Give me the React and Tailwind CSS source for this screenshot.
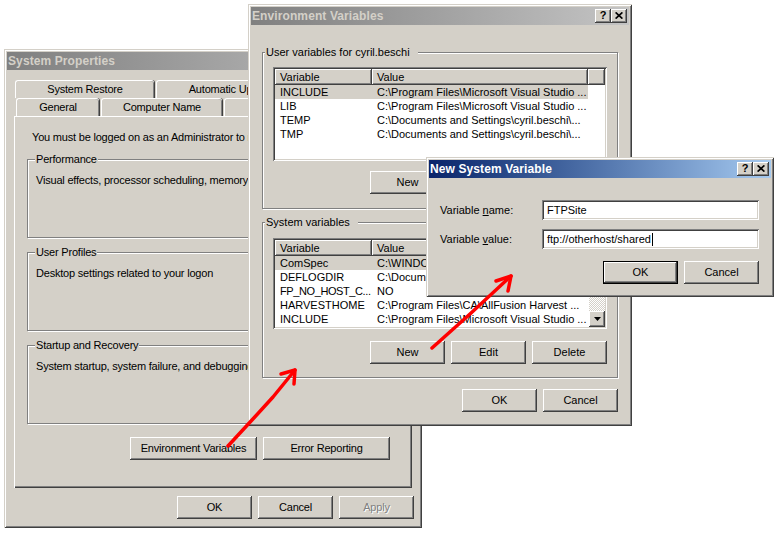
const frame =
  "bg-[#d4d0c8] shadow-[inset_1px_1px_0_#d4d0c8,inset_-1px_-1px_0_#404040,inset_2px_2px_0_#ffffff,inset_-2px_-2px_0_#808080]";
const raised =
  "bg-[#d4d0c8] shadow-[inset_-1px_-1px_0_#404040,inset_1px_1px_0_#ffffff,inset_-2px_-2px_0_#808080,inset_2px_2px_0_#d4d0c8]";
const sunken =
  "shadow-[inset_1px_1px_0_#808080,inset_-1px_-1px_0_#ffffff,inset_2px_2px_0_#404040,inset_-2px_-2px_0_#d4d0c8]";
const headCell =
  "shadow-[inset_-1px_-1px_0_#404040,inset_1px_1px_0_#ffffff,inset_-2px_-2px_0_#808080]";
const etched =
  "min-w-0 border border-[#808080] shadow-[1px_1px_0_#ffffff,inset_1px_1px_0_#ffffff]";

function CaptionButtons() {
  return (
    <div className="mr-[2px] flex">
      <div className={`flex h-[14px] w-[16px] items-center justify-center pb-[1px] ${raised}`}>
        <span className="text-[11px] font-bold leading-none text-black">?</span>
      </div>
      <div className={`flex h-[14px] w-[16px] items-center justify-center pb-[1px] ${raised}`}>
        <svg width="8" height="7" viewBox="0 0 8 7">
          <path d="M0.6 0.4 L7.4 6.6 M7.4 0.4 L0.6 6.6" stroke="#000" strokeWidth="1.7" />
        </svg>
      </div>
    </div>
  );
}

function TitleBar({ title, active }) {
  return (
    <div
      className={`flex h-[18px] shrink-0 items-center justify-between pl-[1px] ${
        active
          ? "bg-linear-to-r from-[#0a246a] to-[#a6caf0] text-white"
          : "bg-linear-to-r from-[#808080] to-[#c4c4c4] text-[#d4d0c8]"
      }`}
    >
      <span className="whitespace-nowrap text-[12px] font-bold tracking-[0.1px]">{title}</span>
      <CaptionButtons />
    </div>
  );
}

function Btn({ children, className = "w-[75px]", def = false, disabled = false }) {
  return (
    <div
      className={`flex h-[23px] shrink-0 items-center justify-center whitespace-nowrap ${raised} ${
        def ? "border border-black" : ""
      } ${className}`}
    >
      {disabled ? (
        <span className="text-[#808080] [text-shadow:1px_1px_0_#ffffff]">{children}</span>
      ) : (
        children
      )}
    </div>
  );
}

function Tab({ className, children }) {
  return (
    <div
      className={`flex h-full items-center justify-center whitespace-nowrap rounded-t-[3px] border-l border-t border-white shadow-[inset_-1px_0_0_#808080,1px_0_0_#404040] ${className}`}
    >
      {children}
    </div>
  );
}

function Group({ legend, className, legendClass, children }) {
  return (
    <fieldset className={`${etched} ${className}`}>
      <legend className={`bg-[#d4d0c8] px-[1px] leading-[11px] ${legendClass}`}>{legend}</legend>
      {children}
    </fieldset>
  );
}

function ListView({ rows, height, scroll = false }) {
  return (
    <div className={`bg-white p-[2px] ${sunken} ${height}`}>
      <div className="flex h-full overflow-hidden bg-white">
        <div className="flex min-w-0 flex-1 flex-col">
          <div className="flex h-[16px] shrink-0 bg-[#d4d0c8]">
            <div className={`flex w-[97px] shrink-0 items-center pl-[5px] ${headCell}`}>Variable</div>
            <div className={`flex w-[216px] shrink-0 items-center pl-[5px] ${headCell}`}>Value</div>
            <div className={`flex-1 ${headCell}`} />
          </div>
          {rows.map((r, i) => (
            <div
              key={i}
              className={`flex h-[14px] w-[313px] shrink-0 items-center whitespace-nowrap ${
                r[2] ? "bg-[#d4d0c8]" : ""
              }`}
            >
              <div className={`w-[97px] shrink-0 overflow-hidden pl-[5px] ${r[3] ? "tracking-[-0.4px]" : ""}`}>
                {r[0]}
              </div>
              <div className="w-[216px] shrink-0 overflow-hidden pl-[5px]">{r[1]}</div>
            </div>
          ))}
        </div>
        {scroll && (
          <div className="flex w-[16px] shrink-0 flex-col">
            <div className={`flex h-[16px] shrink-0 items-center justify-center ${raised}`}>
              <svg width="7" height="4" viewBox="0 0 7 4">
                <path d="M0 4h7L3.5 0z" fill="#000" />
              </svg>
            </div>
            <div className={`h-[24px] shrink-0 ${raised}`} />
            <div className="flex-1 bg-[repeating-conic-gradient(#ffffff_0_25%,#d4d0c8_0_50%)] bg-[length:2px_2px]" />
            <div className={`flex h-[16px] shrink-0 items-center justify-center ${raised}`}>
              <svg width="7" height="4" viewBox="0 0 7 4">
                <path d="M0 0h7L3.5 4z" fill="#000" />
              </svg>
            </div>
          </div>
        )}
      </div>
    </div>
  );
}

const userRows = [
  ["INCLUDE", "C:\\Program Files\\Microsoft Visual Studio ...", true],
  ["LIB", "C:\\Program Files\\Microsoft Visual Studio ..."],
  ["TEMP", "C:\\Documents and Settings\\cyril.beschi\\..."],
  ["TMP", "C:\\Documents and Settings\\cyril.beschi\\..."],
];

const sysRows = [
  ["ComSpec", "C:\\WINDOWS\\system32\\cmd.exe", true],
  ["DEFLOGDIR", "C:\\Documents and Settings\\All Users\\..."],
  ["FP_NO_HOST_C...", "NO", false, true],
  ["HARVESTHOME", "C:\\Program Files\\CA\\AllFusion Harvest ..."],
  ["INCLUDE", "C:\\Program Files\\Microsoft Visual Studio ..."],
  ["LIB", "C:\\Program Files\\Microsoft Visual Studio ..."],
];

function SystemProperties() {
  return (
    <div className={`absolute left-[4px] top-[49px] flex h-[479px] w-[418px] flex-col p-[3px] ${frame}`}>
      <TitleBar title="System Properties" />
      <div className="flex flex-1 flex-col px-[7px] pt-[10px] tracking-[-0.2px]">
        <div className="flex h-[18px] pl-[1px]">
          <Tab className="w-[139px]">System Restore</Tab>
          <Tab className="ml-[2px] w-[154px]">Automatic Updates</Tab>
          <Tab className="ml-[2px] w-[100px]">Remote</Tab>
        </div>
        <div className="flex h-[18px] pl-[2px]">
          <Tab className="w-[83px]">General</Tab>
          <Tab className="ml-[2px] w-[121px]">Computer Name</Tab>
          <Tab className="ml-[2px] w-[96px]">Hardware</Tab>
          <Tab className="ml-[2px] w-[86px]">Advanced</Tab>
        </div>
        <div className="flex h-[372px] flex-col px-[13px] pt-[15px] shadow-[inset_1px_1px_0_#ffffff,inset_-1px_-1px_0_#404040,inset_-2px_-2px_0_#808080]">
          <p className="overflow-hidden whitespace-nowrap pl-[5px]">
            You must be logged on as an Administrator to make most of these changes.
          </p>
          <Group legend="Performance" className="mt-[10px] h-[84px]" legendClass="ml-[7px]">
            <p className="whitespace-nowrap pl-[8px] pt-[9px]">
              Visual effects, processor scheduling, memory usage, and virtual memory
            </p>
          </Group>
          <Group legend="User Profiles" className="mt-[9px] h-[84px]" legendClass="ml-[7px]">
            <p className="whitespace-nowrap pl-[8px] pt-[9px]">Desktop settings related to your logon</p>
          </Group>
          <Group legend="Startup and Recovery" className="mt-[9px] h-[84px]" legendClass="ml-[7px]">
            <p className="whitespace-nowrap pl-[8px] pt-[9px]">
              System startup, system failure, and debugging information
            </p>
          </Group>
          <div className="mt-[13px] flex justify-end gap-[6px] pr-[9px]">
            <Btn className="w-[127px]">Environment Variables</Btn>
            <Btn className="w-[127px]">Error Reporting</Btn>
          </div>
        </div>
        <div className="-mr-[2px] mt-[8px] flex justify-end gap-[6px]">
          <Btn>OK</Btn>
          <Btn>Cancel</Btn>
          <Btn disabled>Apply</Btn>
        </div>
      </div>
    </div>
  );
}

function EnvironmentVariables() {
  return (
    <div className={`absolute left-[248px] top-[4px] flex h-[422px] w-[384px] flex-col p-[3px] ${frame}`}>
      <TitleBar title="Environment Variables" />
      <div className="flex flex-1 flex-col px-[11px] pt-[22px]">
        <Group legend="User variables for cyril.beschi" className="h-[162px]" legendClass="ml-[2px] pr-[8px]">
          <div className="px-[10px] pt-[9px]">
            <ListView rows={userRows} height="h-[94px]" />
            <div className="mt-[10px] flex justify-end gap-[6px]">
              <Btn>New</Btn>
              <Btn>Edit</Btn>
              <Btn>Delete</Btn>
            </div>
          </div>
        </Group>
        <Group legend="System variables" className="mt-[8px] h-[161px]" legendClass="ml-[2px] pr-[8px]">
          <div className="px-[10px] pt-[10px]">
            <ListView rows={sysRows} height="h-[91px]" scroll />
            <div className="mt-[12px] flex justify-end gap-[6px]">
              <Btn>New</Btn>
              <Btn>Edit</Btn>
              <Btn>Delete</Btn>
            </div>
          </div>
        </Group>
        <div className="mt-[11px] flex justify-end gap-[6px]">
          <Btn>OK</Btn>
          <Btn>Cancel</Btn>
        </div>
      </div>
    </div>
  );
}

function NewSystemVariable() {
  return (
    <div className={`absolute left-[426px] top-[157px] flex h-[140px] w-[348px] flex-col p-[3px] ${frame}`}>
      <TitleBar title="New System Variable" active />
      <div className="flex flex-1 flex-col pl-[11px] pr-[12px] pt-[22px]">
        <div className="flex h-[20px] items-center">
          <span className="w-[102px] shrink-0">
            Variable <u>n</u>ame:
          </span>
          <div className={`flex h-full flex-1 items-center bg-white pl-[5px] ${sunken}`}>FTPSite</div>
        </div>
        <div className="mt-[9px] flex h-[20px] items-center">
          <span className="w-[102px] shrink-0">
            Variable <u>v</u>alue:
          </span>
          <div className={`flex h-full flex-1 items-center bg-white pl-[5px] ${sunken}`}>
            ftp://otherhost/shared
            <span className="ml-[1px] inline-block h-[13px] w-[1px] bg-black" />
          </div>
        </div>
        <div className="mt-[12px] flex justify-end gap-[6px]">
          <Btn def>OK</Btn>
          <Btn>Cancel</Btn>
        </div>
      </div>
    </div>
  );
}

function Arrows() {
  return (
    <svg
      className="pointer-events-none absolute left-0 top-0"
      width="778"
      height="535"
      viewBox="0 0 778 535"
      fill="none"
      stroke="#ff0000"
      strokeWidth="3.5"
      strokeLinecap="round"
      strokeLinejoin="round"
    >
      <path d="M228 446 L252 420 L273 397 L295 370" />
      <path d="M281 374 L295 370 L294 384" />
      <path d="M432 348 L470 314 L511 276" />
      <path d="M496 281 L511 276 L508 291" />
    </svg>
  );
}

export default function App() {
  return (
    <div className="relative h-[535px] w-[778px] overflow-hidden bg-white font-['Liberation_Sans',Arial,sans-serif] text-[11px] leading-[13px] text-black">
      <SystemProperties />
      <EnvironmentVariables />
      <NewSystemVariable />
      <Arrows />
    </div>
  );
}
